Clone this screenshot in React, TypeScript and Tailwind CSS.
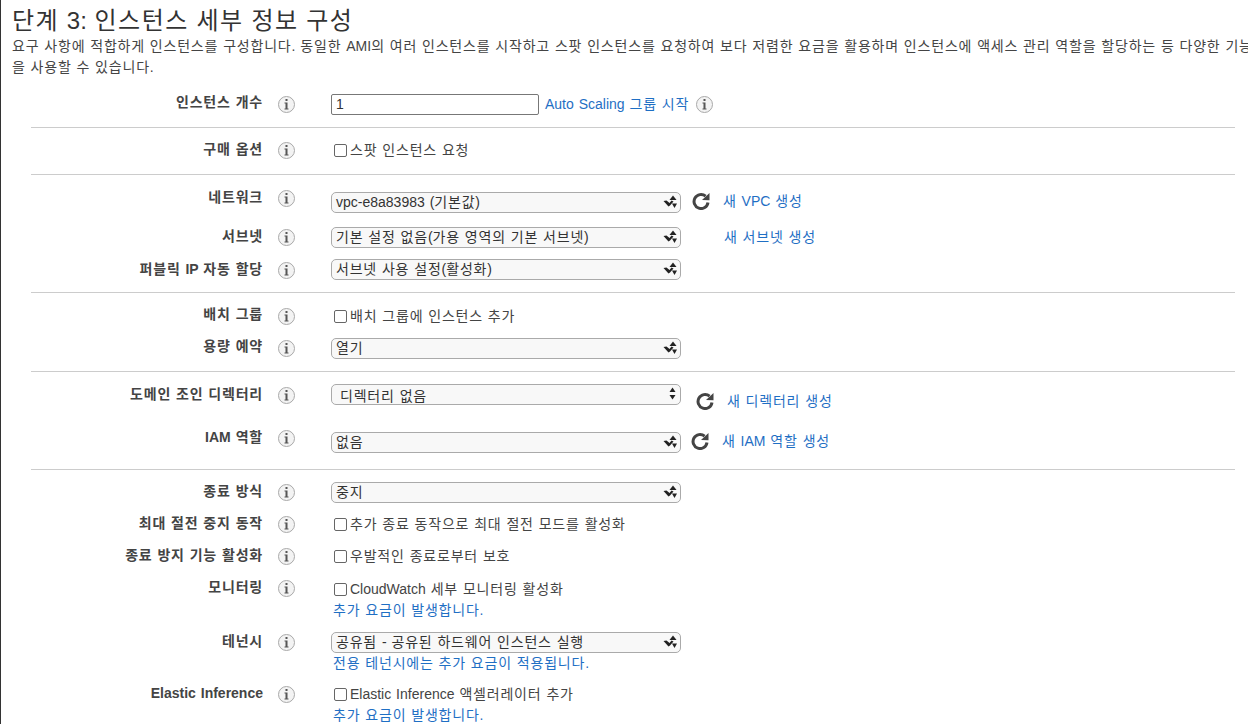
import { ReactNode } from "react";

const font = "font-['Liberation_Sans','Noto_Sans_CJK_KR',sans-serif]";

// hangul runs a bit narrower here than in the screenshot, so give them some tracking
function Ko({ text, big }: { text: string; big?: boolean }) {
  return (
    <>
      {text.split(/([\uAC00-\uD7A3]+)/).map((part, i) =>
        i % 2 === 1 ? (
          <span key={i} className={big ? "tracking-[1.5px]" : "tracking-[0.8px]"}>
            {part}
          </span>
        ) : (
          part
        ),
      )}
    </>
  );
}

function InfoIcon() {
  return (
    <span className="flex h-[17px] w-[17px] items-center justify-center rounded-full border border-[#a9a9a9] bg-[#f3f3f3]">
      <svg width="5" height="11" viewBox="0 0 5 11">
        <rect x="1.5" y="0" width="2" height="2" fill="#555" />
        <path d="M0.5 3.5h3v6h1v1h-4v-1h1v-5h-1z" fill="#555" />
      </svg>
    </span>
  );
}

function Arrows({ plain }: { plain?: boolean }) {
  if (plain) {
    return (
      <svg width="7" height="13" viewBox="0 0 7 13" className="absolute right-[4px] top-[2px]">
        <path d="M3.5 0.5L6.5 5H0.5z" fill="#222" />
        <path d="M3.5 12.5L6.5 8H0.5z" fill="#222" />
      </svg>
    );
  }
  return (
    <svg width="15" height="14" viewBox="0 0 15 14" className="absolute right-[2px] top-[2px]">
      <path d="M10 0.5L13.5 5H6.5z" fill="#222" />
      <path d="M0.5 6l3-0.5 3 2.5 2-2.5 2 1-3.5 4-1.5 1z" fill="#222" />
      <path d="M9 8.5h5l-2.5 4.5z" fill="#222" />
    </svg>
  );
}

function Select({ value, plain }: { value: string; plain?: boolean }) {
  return (
    <div className={`relative h-[21px] w-[350px] shrink-0 whitespace-nowrap rounded-[5px] border border-[#aaa] bg-[#f8f8f8] text-[14px] leading-[19px] text-[#333] ${plain ? "pl-2 pt-[2px]" : "pl-[4px]"}`}>
      <Ko text={value} />
      <Arrows plain={plain} />
    </div>
  );
}

function Check({ label }: { label: string }) {
  return (
    <label className="flex items-center whitespace-nowrap text-[14px] leading-[20px] text-[#444]">
      <span className="ml-[3px] mr-[3px] h-[13px] w-[13px] shrink-0 rounded-[2px] border border-[#666] bg-white" />
      <span><Ko text={label} /></span>
    </label>
  );
}

function Refresh() {
  return (
    <svg width="18" height="18" viewBox="0 0 18 18" fill="none">
      <path d="M16 10.5A7 7 0 1 1 13.6 4.2" stroke="#444" strokeWidth="3" />
      <path d="M10 8L17.5 8.2V1z" fill="#444" />
    </svg>
  );
}

function Link({ children, className = "" }: { children: string; className?: string }) {
  return (
    <a className={`whitespace-nowrap text-[14px] leading-[20px] text-[#1f6fc4] ${className}`}>
      <Ko text={children} />
    </a>
  );
}

type RowProps = {
  label: string;
  height: string;
  labelMargin: string;
  iconMargin: string;
  children: ReactNode;
};

function Row({ label, height, labelMargin, iconMargin, children }: RowProps) {
  return (
    <div className={`flex ${height}`}>
      <div className={`w-[262px] shrink-0 whitespace-nowrap text-right text-[14px] font-bold leading-[20px] text-[#444] ${labelMargin}`}>
        <Ko text={label} />
      </div>
      <div className={`ml-[15px] mr-[36px] w-[17px] shrink-0 ${iconMargin}`}>
        <InfoIcon />
      </div>
      <div className="min-w-0 flex-1">{children}</div>
    </div>
  );
}

function Rule({ className }: { className: string }) {
  return <hr className={`ml-[30px] mr-[13px] border-t border-[#ccc] ${className}`} />;
}

export default function App() {
  return (
    <div className={`h-[724px] w-[1248px] overflow-hidden border-l border-[#333] bg-white [word-spacing:1px] ${font}`}>
      <h1 className="ml-[11px] mt-[6px] whitespace-nowrap text-[24px] font-normal leading-[30px] text-[#333]">
        <Ko big text="단계 3: 인스턴스 세부 정보 구성" />
      </h1>
      <p className="ml-[11px] whitespace-nowrap text-[14px] leading-[21px] text-[#444]">
        <Ko text="요구 사항에 적합하게 인스턴스를 구성합니다. 동일한 AMI의 여러 인스턴스를 시작하고 스팟 인스턴스를 요청하여 보다 저렴한 요금을 활용하며 인스턴스에 액세스 관리 역할을 할당하는 등 다양한 기능" />
        <br />
        <Ko text="을 사용할 수 있습니다." />
      </p>

      <div className="mt-[16px]">
        <Row label="인스턴스 개수" height="h-[33px]" labelMargin="-mt-[2px]" iconMargin="mt-[2px]">
          <div className="flex items-start">
            <div className="h-[21px] w-[208px] rounded-[2px] border border-[#777] pl-[4px] text-[14px] leading-[19px] text-[#333]">1</div>
            <Link className="ml-[6px]">Auto Scaling 그룹 시작</Link>
            <span className="ml-[7px] mt-[2px]"><InfoIcon /></span>
          </div>
        </Row>
        <Rule className="mb-[12px]" />
        <Row label="구매 옵션" height="h-[34px]" labelMargin="-mt-px" iconMargin="mt-[2px]">
          <Check label="스팟 인스턴스 요청" />
        </Row>
        <Rule className="mb-[17px]" />
        <Row label="네트워크" height="h-[35px]" labelMargin="-mt-[5px]" iconMargin="-mt-[2px]">
          <div className="flex items-start">
            <Select value="vpc-e8a83983 (기본값)" />
            <span className="ml-[11px] flex"><Refresh /></span>
            <Link className="ml-[13px] -mt-px">새 VPC 생성</Link>
          </div>
        </Row>
        <Row label="서브넷" height="h-[32px]" labelMargin="-mt-px" iconMargin="mt-[2px]">
          <div className="flex items-start">
            <Select value="기본 설정 없음(가용 영역의 기본 서브넷)" />
            <Link className="ml-[43px]">새 서브넷 생성</Link>
          </div>
        </Row>
        <Row label="퍼블릭 IP 자동 할당" height="h-[33px]" labelMargin="mt-0" iconMargin="mt-[3px]">
          <Select value="서브넷 사용 설정(활성화)" />
        </Row>
        <Rule className="mb-[13px]" />
        <Row label="배치 그룹" height="h-[32px]" labelMargin="-mt-[2px]" iconMargin="mt-[2px]">
          <Check label="배치 그룹에 인스턴스 추가" />
        </Row>
        <Row label="용량 예약" height="h-[33px]" labelMargin="-mt-[2px]" iconMargin="mt-[2px]">
          <Select value="열기" />
        </Row>
        <Rule className="mb-[12px]" />
        <Row label="도메인 조인 디렉터리" height="h-[48px]" labelMargin="mt-0" iconMargin="mt-[3px]">
          <div className="flex items-start">
            <Select value="디렉터리 없음" plain />
            <span className="ml-[15px] mt-[8px] flex"><Refresh /></span>
            <Link className="ml-[13px] mt-[7px]">새 디렉터리 생성</Link>
          </div>
        </Row>
        <Row label="IAM 역할" height="h-[37px]" labelMargin="-mt-[5px]" iconMargin="-mt-[2px]">
          <div className="flex items-start">
            <Select value="없음" />
            <span className="ml-[10px] flex"><Refresh /></span>
            <Link className="ml-[13px] -mt-px">새 IAM 역할 생성</Link>
          </div>
        </Row>
        <Rule className="mb-[12px]" />
        <Row label="종료 방식" height="h-[32px]" labelMargin="-mt-px" iconMargin="mt-[2px]">
          <Select value="중지" />
        </Row>
        <Row label="최대 절전 중지 동작" height="h-[32px]" labelMargin="-mt-px" iconMargin="mt-[2px]">
          <Check label="추가 종료 동작으로 최대 절전 모드를 활성화" />
        </Row>
        <Row label="종료 방지 기능 활성화" height="h-[33px]" labelMargin="-mt-px" iconMargin="mt-[2px]">
          <Check label="우발적인 종료로부터 보호" />
        </Row>
        <Row label="모니터링" height="h-[53px]" labelMargin="-mt-[2px]" iconMargin="mt-px">
          <Check label="CloudWatch 세부 모니터링 활성화" />
          <Link className="ml-[2px] mt-px block">추가 요금이 발생합니다.</Link>
        </Row>
        <Row label="테넌시" height="h-[52px]" labelMargin="-mt-px" iconMargin="mt-[2px]">
          <Select value="공유됨 - 공유된 하드웨어 인스턴스 실행" />
          <Link className="ml-[2px] block">전용 테넌시에는 추가 요금이 적용됩니다.</Link>
        </Row>
        <Row label="Elastic Inference" height="h-[40px]" labelMargin="-mt-px" iconMargin="mt-[2px]">
          <Check label="Elastic Inference 액셀러레이터 추가" />
          <Link className="ml-[2px] mt-px block">추가 요금이 발생합니다.</Link>
        </Row>
      </div>
    </div>
  );
}
